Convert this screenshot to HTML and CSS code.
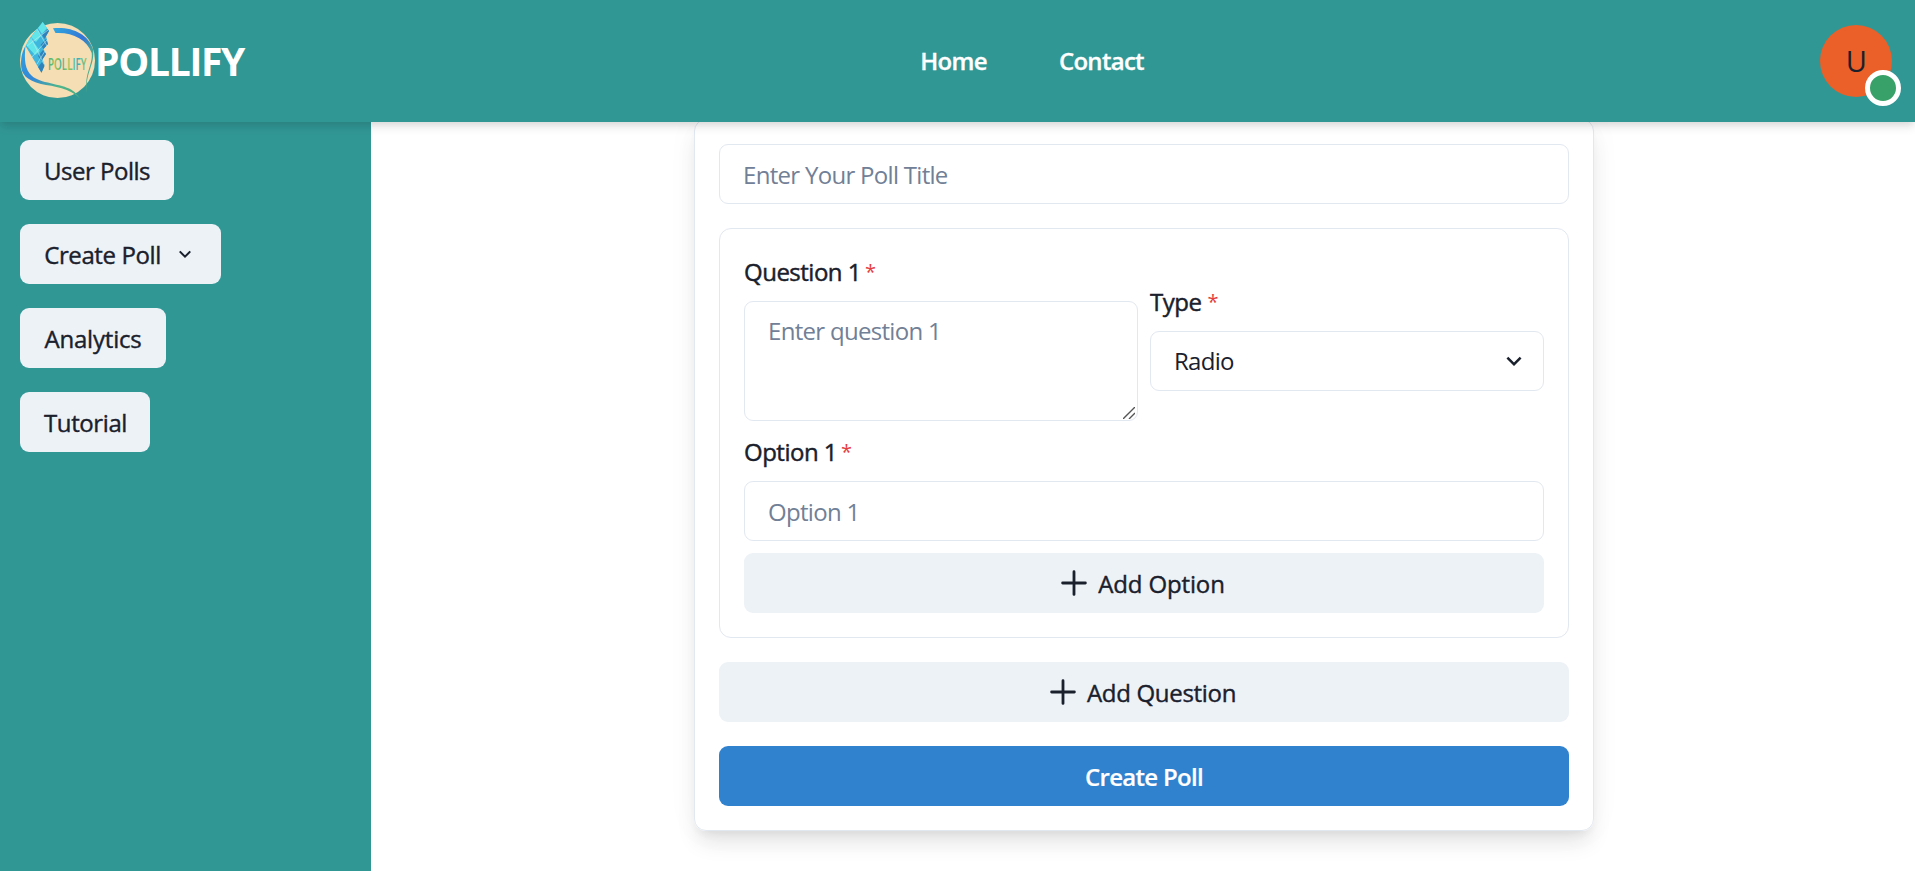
FILE: index.html
```html
<!DOCTYPE html>
<html lang="en">
<head>
<meta charset="utf-8">
<title>Pollify</title>
<link rel="stylesheet" href="styles.css">
</head>
<body>
<header class="header">
  <a class="brand">
    <svg class="logo" viewBox="0 0 77 80">
      <defs>
        <linearGradient id="swoosh" x1="0" y1="0" x2="1" y2="1"><stop offset="0" stop-color="#2fa3e0"/><stop offset=".4" stop-color="#3387d8"/><stop offset=".7" stop-color="#4fb58c"/><stop offset="1" stop-color="#4cae80"/></linearGradient>
        <linearGradient id="ribbon" x1="0" y1="0" x2="1" y2="1"><stop offset="0" stop-color="#2fa8df"/><stop offset=".45" stop-color="#3474d6"/><stop offset=".65" stop-color="#43a79a"/><stop offset="1" stop-color="#5cb878"/></linearGradient>
        <linearGradient id="word" x1="0" y1="0" x2="1" y2="0"><stop offset="0" stop-color="#37b58d"/><stop offset=".22" stop-color="#9dc14e"/><stop offset=".35" stop-color="#2fb0a5"/><stop offset=".5" stop-color="#a3c44e"/><stop offset=".75" stop-color="#2fb2c4"/><stop offset="1" stop-color="#93c25c"/></linearGradient>
      </defs>
      <circle cx="37.500" cy="42.500" r="37.500" fill="#f5deb3"/>
      <path d="M5.500 28C4 42 5 52 12 58C19 65 42 66 51 71.500C56 74.500 58 78 60 80.500C50 70 34 68.500 21 66C7 62 1 57 1 46C1 38 3 32 5.500 28Z" fill="url(#swoosh)"/>
      <path d="M33 10.300C52 8.500 68 16 73 31C75 47 66 52 66.300 75C64.500 54 73 47 71.700 35C67 21 52 14 35.500 15Z" fill="url(#ribbon)"/>
      <path d="M22.700 4L29 13L26 18L28 26L23.500 31L26 36L22.500 41L24.500 47L21.500 54.700L5.500 28L10 20Z" fill="#3fb6dd"/>
      <path d="M22.700 4L27 10L22 16L18 10ZM17 11L21 18L16 24L11 19ZM10 20L15 26L20 33L15 37L6 27Z" fill="#62e5e8"/>
      <path d="M27.500 11L29 13L24.500 21L22 17ZM26 21L28 26L23.500 31L20.500 27ZM23 32L26 36L21.500 43L18 38ZM22 44L24.500 48L21.500 54.700L18 49Z" fill="#2f83bd"/>
      <path d="M11 20L24 46M17 11L27 28M7 28L28 12M12 39L27 22M17 46L25 33" fill="none" stroke="#bceeee" stroke-width=".6"/>
      <text class="logo-word" transform="translate(28 52) scale(.58 1)" fill="url(#word)">POLLIFY</text>
    </svg>
    <span class="brand-name">POLLIFY</span>
  </a>
  <nav class="nav"><a class="nav-home">Home</a><a class="nav-contact">Contact</a></nav>
  <div class="avatar">U<span class="badge"></span></div>
</header>
<div class="layout">
  <aside class="sidebar">
    <button class="btn side-polls">User Polls</button>
    <button class="btn side-create">Create Poll
      <svg class="chevron-small" viewBox="0 0 24 24"><path d="M5 8.500L12 15.500L19 8.500" fill="none" stroke="currentColor" stroke-width="2.800"/></svg>
    </button>
    <button class="btn side-analytics">Analytics</button>
    <button class="btn side-tutorial">Tutorial</button>
  </aside>
  <main class="main">
    <form class="card">
      <input class="field" placeholder="Enter Your Poll Title">
      <section class="question">
        <div class="row">
          <div class="col">
            <label class="label">Question 1<span class="star">*</span></label>
            <div class="area-wrap">
              <textarea class="field area" placeholder="Enter question 1"></textarea>
              <svg class="grip" viewBox="0 0 12 12"><path d="M0 12L12 0M6 12L12 6" stroke="#555" stroke-width="1.400"/></svg>
            </div>
          </div>
          <div class="col">
            <label class="label">Type<span class="star star-type">*</span></label>
            <div class="field select"><span>Radio</span>
              <svg class="chevron" viewBox="0 0 24 24"><path d="M16.590 8.590L12 13.170 7.410 8.590 6 10l6 6 6-6z" fill="currentColor"/></svg>
            </div>
          </div>
        </div>
        <label class="label label-option">Option 1<span class="star">*</span></label>
        <input class="field" placeholder="Option 1">
        <button type="button" class="btn add-option"><svg class="plus" viewBox="0 0 24 24"><path d="M12 1.500V22.500M1.500 12H22.500" stroke="currentColor" stroke-width="2.600" stroke-linecap="round"/></svg><span>Add Option</span></button>
      </section>
      <button type="button" class="btn add-question"><svg class="plus" viewBox="0 0 24 24"><path d="M12 1.500V22.500M1.500 12H22.500" stroke="currentColor" stroke-width="2.600" stroke-linecap="round"/></svg><span>Add Question</span></button>
      <button type="button" class="btn primary">Create Poll</button>
    </form>
  </main>
</div>
</body>
</html>
```
FILE: styles.css
```css
* { box-sizing: border-box; }
body {
  margin: 0;
  height: 871px;
  overflow: hidden;
  background: #fff;
  color: #1a202c;
  font-family: "Open Sans", "Noto Sans", sans-serif;
  font-size: 24px;
  line-height: 36px;
  letter-spacing: -0.7px;
}
.header {
  position: relative;
  z-index: 2;
  display: flex;
  justify-content: space-between;
  align-items: center;
  height: 122px;
  padding: 0 23px 0 20px;
  background: #319795;
  color: #fff;
  box-shadow: 0 6px 9px -1px rgba(0, 0, 0, .1), 0 3px 6px -1px rgba(0, 0, 0, .06);
}
.brand { display: flex; align-items: center; }
.logo { width: 77px; height: 80px; margin-bottom: 6px; overflow: visible; }
.logo-word { font-family: "Open Sans", sans-serif; font-size: 17px; font-weight: 600; letter-spacing: 0; }
.brand-name { margin-left: -2px; font-size: 39px; font-weight: 700; letter-spacing: -1.3px; line-height: 60px; }
.nav { display: flex; gap: 72px; font-weight: 600; -webkit-text-stroke: .3px currentColor; }
.avatar {
  position: relative;
  width: 72px;
  height: 72px;
  border-radius: 50%;
  background: #eb5f28;
  color: #1a202c;
  font-size: 29px;
  line-height: 72px;
  text-align: center;
}
.badge {
  position: absolute;
  right: -9px;
  bottom: -9px;
  width: 36px;
  height: 36px;
  border: 5px solid #fff;
  border-radius: 50%;
  background: #38a169;
}
.layout { display: flex; height: 749px; }
.sidebar {
  display: flex;
  flex-direction: column;
  align-items: flex-start;
  gap: 24px;
  width: 371px;
  padding: 18px 20px;
  background: #319795;
}
.btn {
  display: flex;
  align-items: center;
  justify-content: center;
  width: 100%;
  height: 60px;
  flex: none;
  padding: 2px 0 0;
  border: 0;
  border-radius: 9px;
  background: #edf2f7;
  color: #1a202c;
  font: inherit;
  font-weight: 500;
  letter-spacing: -0.4px;
  -webkit-text-stroke: .4px currentColor;
}
.side-polls { width: 154px; letter-spacing: -0.5px; }
.side-create { width: 201px; padding-left: 1px; }
.side-analytics { width: 146px; letter-spacing: -0.2px; }
.side-tutorial { width: 130px; padding-left: 1px; }
.chevron-small { width: 18px; height: 18px; margin: 0 4px 3px 15px; }
.main { display: flex; justify-content: center; align-items: flex-start; flex: 1; padding-left: 2px; }
.card {
  display: flex;
  flex-direction: column;
  gap: 24px;
  width: 900px;
  margin-top: -3px;
  padding: 24px;
  border: 1px solid #e2e8f0;
  border-radius: 12px;
  box-shadow: 0 15px 22px -4px rgba(0, 0, 0, .1), 0 6px 9px -3px rgba(0, 0, 0, .05), 0 0 36px rgba(0, 0, 0, .03);
}
.field {
  display: block;
  width: 100%;
  height: 60px;
  padding: 0 23px;
  border: 1px solid #e2e8f0;
  border-radius: 9px;
  background: #fff;
  color: #1a202c;
  font: inherit;
  letter-spacing: inherit;
}
.field::placeholder { color: #718096; opacity: 1; }
.question { height: 410px; padding: 24px; border: 1px solid #e2e8f0; border-radius: 12px; }
.row { display: flex; align-items: center; gap: 12px; }
.col { flex: 1; }
.area-wrap { position: relative; }
.area { height: 120px; padding: 11px 23px; resize: none; }
.grip { position: absolute; right: 3px; bottom: 2px; width: 12px; height: 12px; }
.label {
  display: block;
  height: 36px;
  margin-bottom: 12px;
  padding-top: 1px;
  font-weight: 500;
  letter-spacing: -0.5px;
  -webkit-text-stroke: .45px currentColor;
}
.label-option { margin-top: 12px; }
.star { margin-left: 4px; color: #e53e3e; font-weight: 400; font-size: 20px; line-height: 1; vertical-align: 2px; -webkit-text-stroke: 0; }
.star-type { margin-left: 6px; }
.select { display: flex; align-items: center; justify-content: space-between; padding-right: 14px; }
.chevron { width: 30px; height: 30px; }
.add-option { margin-top: 12px; letter-spacing: -0.15px; }
.add-question { letter-spacing: -0.3px; }
.plus { width: 26px; height: 26px; margin: 0 11px 3px -2px; }
.primary { background: #3182ce; color: #fff; font-weight: 600; letter-spacing: -0.7px; -webkit-text-stroke: .2px currentColor; }
```
